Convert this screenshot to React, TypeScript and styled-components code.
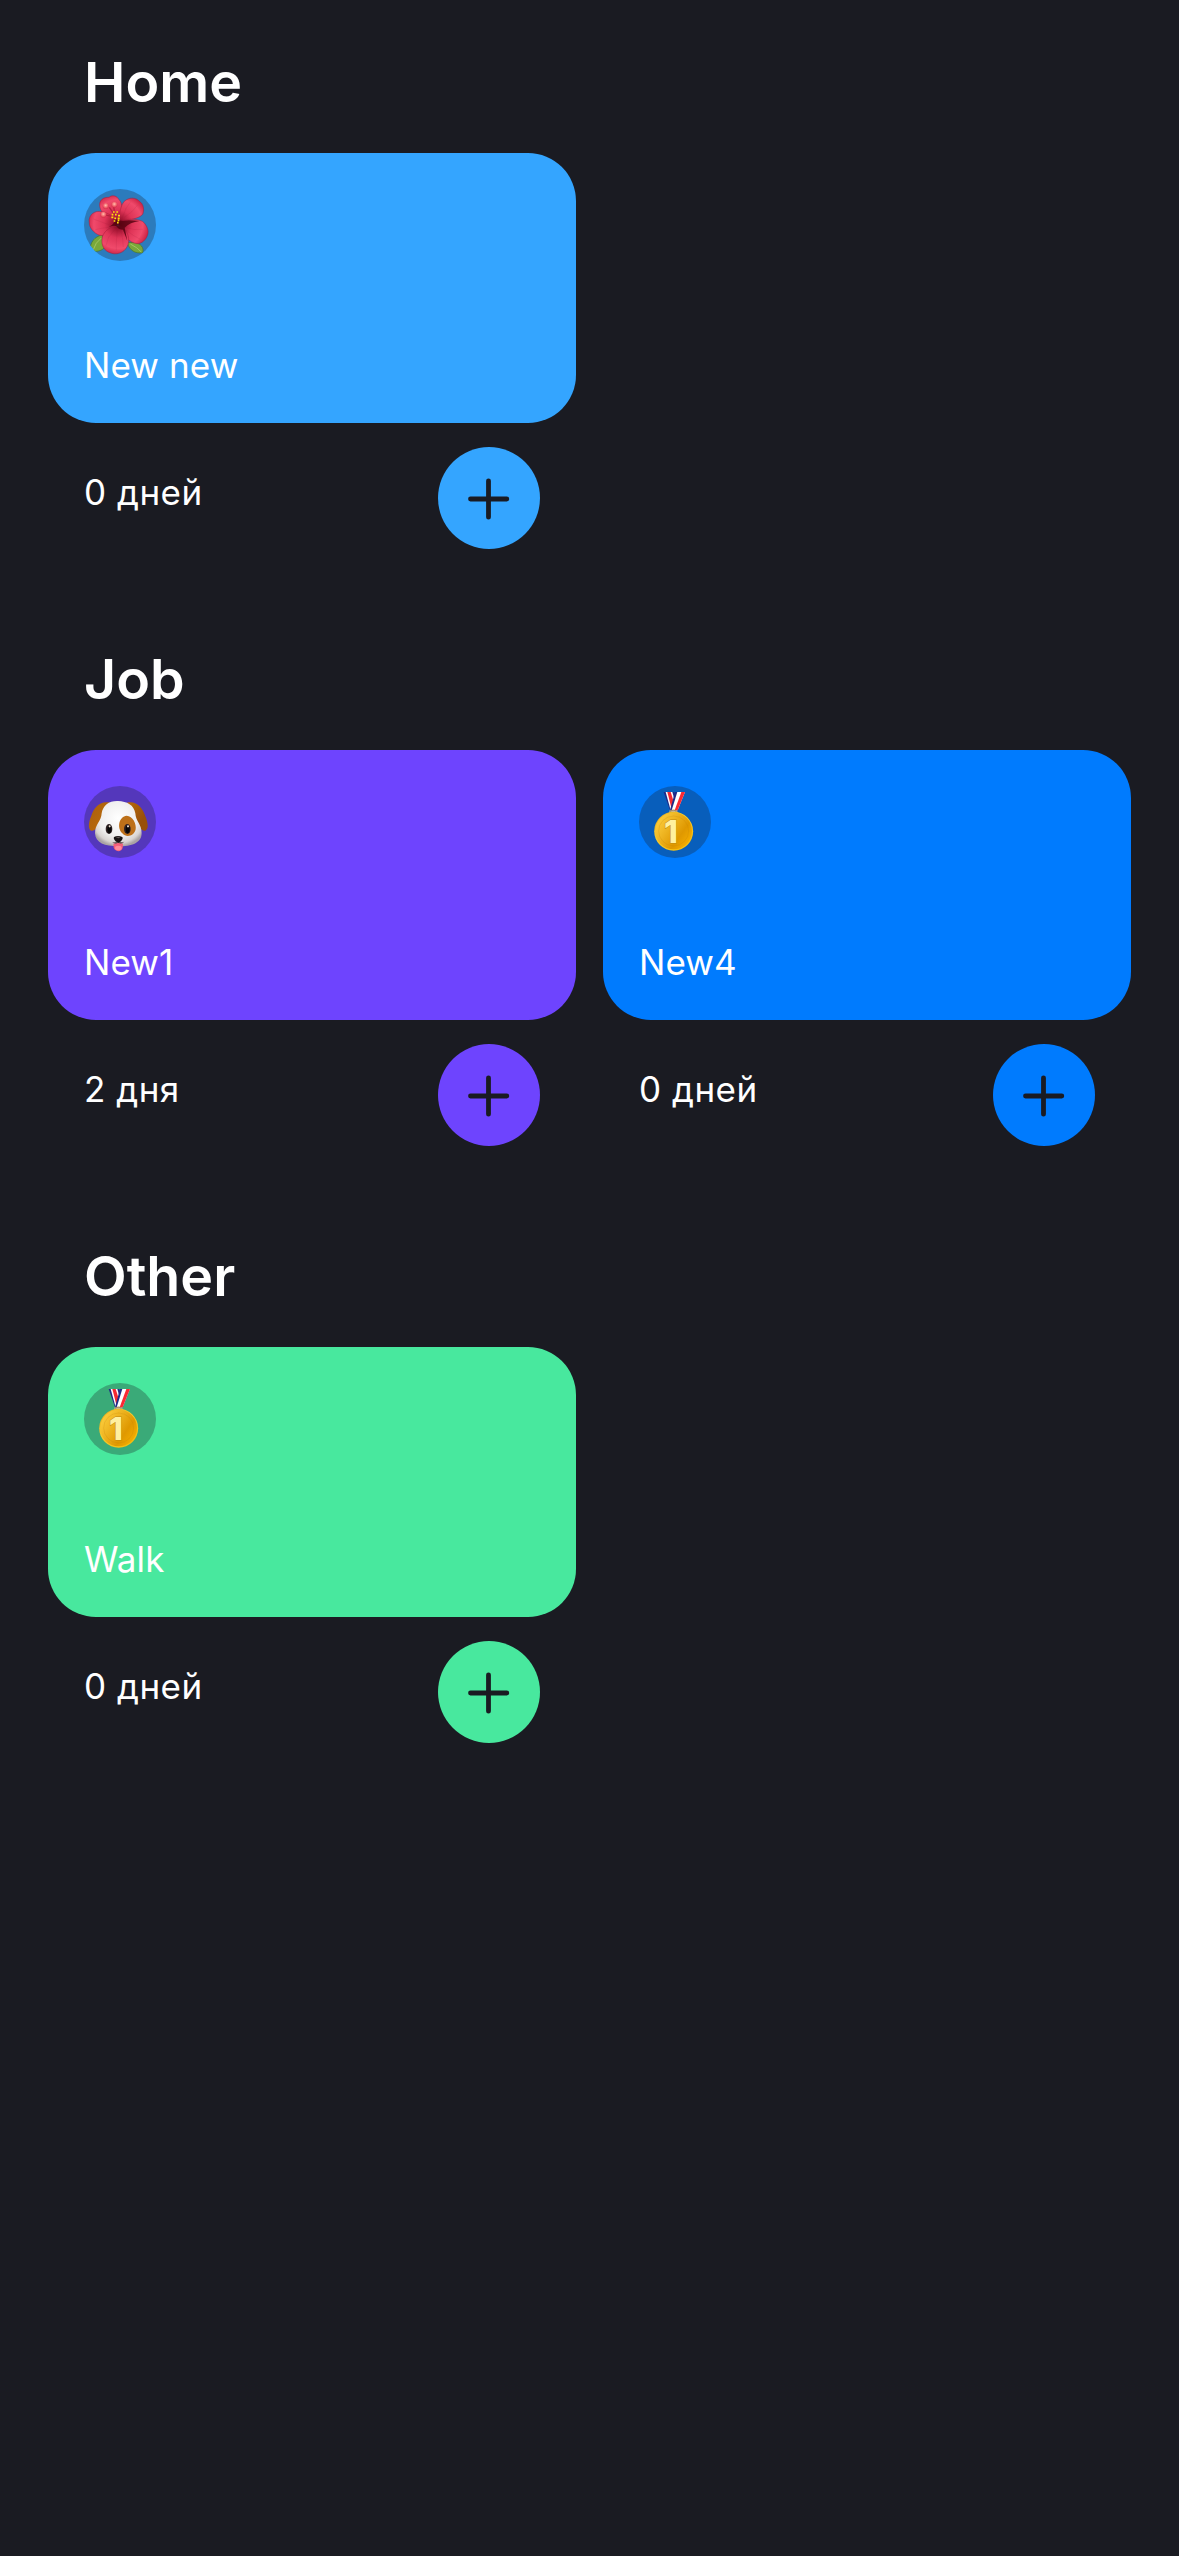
import React from 'react';
import styled, { createGlobalStyle } from 'styled-components';

const GlobalStyle = createGlobalStyle`
  *, *::before, *::after { box-sizing: border-box; }
  html, body { margin: 0; padding: 0; background: #1a1b22; }
`;

const Screen = styled.main`
  width: 1179px;
  min-height: 2556px;
  padding: 0 48px;
  background: #1a1b22;
  color: #fff;
  font-family: Inter, 'Noto Sans', sans-serif;
`;

const Section = styled.section`
  display: flex;
  flex-direction: column;
  height: 597px;
`;

const Title = styled.h2`
  margin: 0;
  height: 153px;
  padding: 47.5px 36px 0;
  font-size: 55.5px;
  line-height: 68px;
  font-weight: 600;
  letter-spacing: 0;
`;

const Grid = styled.div`
  display: grid;
  grid-template-columns: repeat(2, 528px);
  column-gap: 27px;
`;

const Tracker = styled.article`
  display: flex;
  flex-direction: column;
  gap: 24px;
`;

const Card = styled.div<{ $color: string }>`
  display: flex;
  flex-direction: column;
  justify-content: space-between;
  height: 270px;
  padding: 36px;
  border-radius: 48px;
  background: ${(p) => p.$color};
`;

const EmojiBadge = styled.div`
  display: flex;
  width: 72px;
  height: 72px;
  overflow: hidden;
  border-radius: 50%;
  background: rgba(26, 27, 34, 0.3);
`;

const Label = styled.span`
  font-size: 35px;
  line-height: 44px;
  letter-spacing: 0.1px;
`;

const Footer = styled.div`
  display: flex;
  justify-content: space-between;
  padding: 0 36px;
`;

const Days = styled(Label)`
  padding-top: 23px;
  letter-spacing: 0.5px;
`;

const AddButton = styled.button<{ $color: string }>`
  display: flex;
  align-items: center;
  justify-content: center;
  width: 102px;
  height: 102px;
  padding: 1px 0 0;
  border: 0;
  border-radius: 50%;
  background: ${(p) => p.$color};
`;

const PlusIcon = () => (
  <svg width="42" height="42" viewBox="0 0 42 42" fill="none" stroke="#1a1b22" strokeWidth="4.8" strokeLinecap="round">
    <path d="M20.5 2.8V39.2M2.5 21H38.8" />
  </svg>
);

const Hibiscus = () => (
  <svg width="72" height="72" viewBox="30 27 216 216">
    <defs>
      <radialGradient id="petal" gradientUnits="userSpaceOnUse" cx="133" cy="132" r="92">
        <stop offset="0" stopColor="#650416" />
        <stop offset="0.2" stopColor="#a51634" />
        <stop offset="0.46" stopColor="#df3457" />
        <stop offset="0.8" stopColor="#f04a6b" />
        <stop offset="1" stopColor="#cf2547" />
      </radialGradient>
      <radialGradient id="bead" cx="0.5" cy="0.4" r="0.6">
        <stop offset="0" stopColor="#ffc2ad" />
        <stop offset="0.45" stopColor="#f7767a" />
        <stop offset="1" stopColor="#d52a45" />
      </radialGradient>
    </defs>
    <g fill="#79a83a" stroke="#47772a" strokeWidth="2">
      <path d="M84 165C62 170 49 185 47 213C63 218 88 212 93 200Z" />
      <path d="M160 188C166 211 184 222 206 218C211 203 200 190 181 187Z" />
      <path d="M82 174Q64 187 57 211M169 192Q191 203 202 216" stroke="#b7d477" fill="none" />
    </g>
    <g fill="url(#petal)" stroke="#a71c3b" strokeWidth="1.5">
      <path d="M132 127C111 119 80 105 77 78C75 61 88 51 105 52C116 43 129 48 135 59C147 70 146 94 132 127Z" />
      <path d="M133 130C137 96 140 76 151 64C165 51 186 52 195 63C210 72 211 91 206 103C192 119 157 119 133 130Z" />
      <path d="M132 132C118 104 90 91 67 95C50 99 43 116 46 128C45 143 60 159 75 165C101 173 116 151 132 132Z" />
      <path d="M132 130C153 113 190 116 205 124C216 132 224 148 222 159C220 174 209 187 194 191C173 191 159 178 148 160Z" />
      <path d="M130 138C105 140 84 158 84 179C82 196 91 213 108 218C124 226 145 219 154 208C169 190 167 165 151 145Z" />
    </g>
    <g fill="none" stroke="#8e1732" strokeWidth="1.4" opacity="0.25">
      <path d="M145 113Q155 81 170 65M151 112Q177 96 190 76M112 137Q83 126 58 117M113 141Q86 143 64 149M120 151Q99 171 96 197M130 151Q126 180 127 211M141 151Q147 176 148 201M153 142Q181 152 207 148M154 148Q178 169 199 178" />
    </g>
    <path d="M149 122Q134 123 121 117Q128 128 104 141Q127 133 130 142Q134 149 147 149L160 183L152 143Q168 127 196 123Q164 119 149 122Z" fill="#50010e" opacity="0.8" />
    <path d="M129 116L106 82M123 110L119 78M116 110L91 104" stroke="#b4223d" strokeWidth="4" />
    <g fill="url(#bead)">
      <circle cx="95" cy="78" r="9" /><circle cx="121" cy="74" r="9" /><circle cx="88" cy="104" r="9" />
    </g>
    <path d="M117 96h5m5 0h5m-19 8h5m5 0h5m4 3h6m-26 5h6m3 3h5m5 0h6m-18 8h5m7-2h5m-7 7h5" stroke="#ffe00a" strokeWidth="5" />
  </svg>
);

const Dog = () => (
  <svg width="72" height="72" viewBox="30 30 216 216">
    <defs>
      <radialGradient id="fur" cx="0.5" cy="0.38" r="0.62">
        <stop offset="0" stopColor="#fff" />
        <stop offset="0.65" stopColor="#efeeee" />
        <stop offset="0.88" stopColor="#d8d3d1" />
        <stop offset="1" stopColor="#aaa3a4" />
      </radialGradient>
      <linearGradient id="ear" x1="0" y1="0" x2="1" y2="0.3">
        <stop offset="0" stopColor="#a95e0e" /><stop offset="0.55" stopColor="#bd6d0b" /><stop offset="1" stopColor="#985009" />
      </linearGradient>
    </defs>
    <path d="M108 80C77 73 59 96 52 119C44 137 41 157 51 164C61 168 75 149 83 135L101 91ZM159 80C189 74 206 97 214 121C222 140 225 159 214 164C203 168 190 147 182 132L162 94Z" fill="url(#ear)" />
    <path d="M132 75C105 74 87 88 83 112C82 136 63 144 63 172C64 201 93 211 132 211C174 211 203 201 203 171C203 145 185 136 184 112C180 87 159 76 132 75Z" fill="url(#fur)" />
    <path d="M158 119C176 120 188 143 185 160C181 180 157 187 145 172C127 154 136 121 158 119Z" fill="#bd7019" />
    <g fill="#302224"><ellipse cx="105" cy="159" rx="10" ry="15" /><ellipse cx="160" cy="159" rx="10" ry="15" /></g>
    <g fill="#080708"><ellipse cx="106" cy="160" rx="6" ry="12" /><ellipse cx="161" cy="160" rx="6" ry="12" /></g>
    <g fill="#f1dfd1"><circle cx="107" cy="151" r="3.2" /><circle cx="162" cy="151" r="3.2" /></g>
    <path d="M118 203Q132 198 147 203L146 215C144 229 121 229 119 214Z" fill="#f45e79" />
    <ellipse cx="133" cy="216" rx="10" ry="7" fill="#ff8a9b" />
    <path d="M113 197Q127 209 132 198Q140 209 151 197Q142 201 133 194Q123 202 113 197Z" fill="#6b5c5c" />
    <path d="M120 183Q132 177 145 183C149 189 139 198 133 201C125 197 117 190 120 183Z" fill="#181314" />
    <path d="M125 184Q132 181 139 184L134 187Z" fill="#655a5c" />
  </svg>
);

const MedalNumber = styled.text`
  font-family: Inter, sans-serif;
  font-size: 94px;
  font-weight: 800;
  fill: #fff0a0;
  stroke: #c18a13;
  stroke-width: 3px;
  paint-order: stroke;
`;

const Medal = () => (
  <svg width="72" height="72" viewBox="33 30 216 216">
    <defs>
      <linearGradient id="gold" x1="0" y1="0.1" x2="1" y2="0.8">
        <stop offset="0" stopColor="#ffd343" /><stop offset="0.38" stopColor="#eeb421" />
        <stop offset="0.7" stopColor="#df9800" /><stop offset="1" stopColor="#f7b000" />
      </linearGradient>
      <linearGradient id="rim" x1="0" y1="0" x2="0.8" y2="1">
        <stop offset="0" stopColor="#e3a51a" /><stop offset="0.45" stopColor="#f5cb30" /><stop offset="1" stopColor="#f5bb0b" />
      </linearGradient>
    </defs>
    <path d="M126 99h21l2 13h-26Z" fill="#c6b798" />
    <path d="M107 48H139L149 78L146 103H126Z" fill="#202a88" />
    <path d="M113 48H133L145 91L140 103H128Z" fill="#fff" />
    <path d="M118 48H128L143 96L139 103H132Z" fill="#f32932" />
    <path d="M141 48H171L149 103H126Z" fill="#202a88" />
    <path d="M148 48H171L149 103H131Z" fill="#fff" />
    <path d="M160 48H171L149 103H140Z" fill="#fa2932" />
    <ellipse cx="136" cy="107" rx="8" ry="5" fill="none" stroke="#a7904d" strokeWidth="3" />
    <circle cx="137" cy="166" r="58.5" fill="url(#rim)" />
    <circle cx="137" cy="165" r="55" fill="url(#gold)" />
    <circle cx="137" cy="165" r="45" fill="none" stroke="#bd7d08" strokeWidth="3" opacity="0.2" />
    <MedalNumber x="108" y="200">1</MedalNumber>
  </svg>
);

const sections = [
  { title: 'Home', items: [{ name: 'New new', days: '0 дней', color: '#34a5ff', Icon: Hibiscus }] },
  { title: 'Job', items: [
    { name: 'New1', days: '2 дня', color: '#6e44fe', Icon: Dog },
    { name: 'New4', days: '0 дней', color: '#007bfe', Icon: Medal },
  ] },
  { title: 'Other', items: [{ name: 'Walk', days: '0 дней', color: '#48e89e', Icon: Medal }] },
];

export default function App() {
  return (
    <>
      <GlobalStyle />
      <Screen>
        {sections.map(({ title, items }) => (
          <Section key={title}>
            <Title>{title}</Title>
            <Grid>
              {items.map(({ name, days, color, Icon }) => (
                <Tracker key={name}>
                  <Card $color={color}>
                    <EmojiBadge><Icon /></EmojiBadge>
                    <Label>{name}</Label>
                  </Card>
                  <Footer>
                    <Days>{days}</Days>
                    <AddButton $color={color} aria-label="Add"><PlusIcon /></AddButton>
                  </Footer>
                </Tracker>
              ))}
            </Grid>
          </Section>
        ))}
      </Screen>
    </>
  );
}
